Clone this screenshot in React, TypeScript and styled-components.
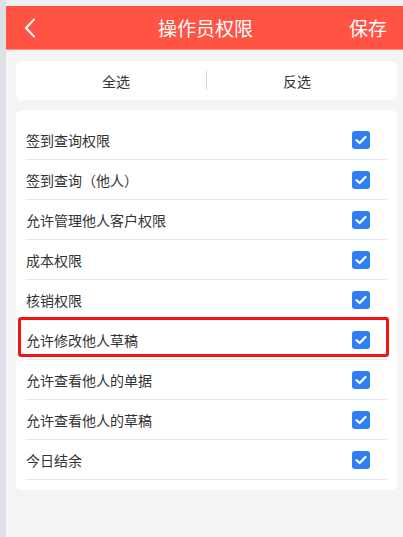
import React from "react";
import styled, { createGlobalStyle } from "styled-components";

const GlobalStyle = createGlobalStyle`
  html, body { margin: 0; padding: 0; }
  body {
    background: #f4f4f4;
    font-family: "Noto Sans CJK SC", "Noto Sans", sans-serif;
  }
  * { box-sizing: border-box; }
`;

const Frame = styled.div`
  display: flex;
  width: 403px;
  height: 537px;
  overflow: hidden;
  background: #efefef;
`;

const LeftStrip = styled.div`
  width: 6px;
  flex: none;
  background: #dde0e5;
`;

const Screen = styled.div`
  flex: 1;
  display: flex;
  flex-direction: column;
  margin-top: 6px;
  background: #f4f4f4;
`;

const Header = styled.header`
  height: 44px;
  flex: none;
  display: grid;
  grid-template-columns: 60px 1fr 60px;
  align-items: center;
  background: #ff5443;
  border-bottom: 1px solid #fb8f84;
  color: #fff;
`;

const BackButton = styled.div`
  display: flex;
  align-items: center;
  padding-left: 18px;
  padding-top: 1px;
`;

const Title = styled.h1`
  margin: 0;
  text-align: center;
  font-size: 19px;
  font-weight: 400;
  line-height: 1;
  padding-left: 2px;
`;

const SaveButton = styled.div`
  text-align: right;
  padding-right: 16px;
  font-size: 19px;
  line-height: 1;
`;

const Body = styled.main`
  display: flex;
  flex-direction: column;
  padding: 11px 6px 0 10px;
  gap: 10px;
`;

const SelectCard = styled.div`
  height: 39px;
  background: #fff;
  border-radius: 6px;
  display: flex;
  align-items: center;
  padding: 0 10px;
`;

const SelectAction = styled.div`
  flex: 1;
  text-align: center;
  font-size: 14px;
  color: #333;
  line-height: 1;
`;

const VDivider = styled.div`
  width: 1px;
  height: 19px;
  background: #d6d6d6;
`;

const ListCard = styled.div`
  background: #fff;
  border-radius: 6px;
  padding: 10px 10px;
`;

const Row = styled.div`
  position: relative;
  height: 40px;
  display: flex;
  align-items: center;
  justify-content: space-between;
  border-bottom: 1px solid #e8e8e8;
  font-size: 14px;
  color: #333;
`;

const Label = styled.span`
  line-height: 1;
`;

const Check = styled.span`
  width: 18px;
  height: 18px;
  margin-right: 17px;
  border-radius: 3px;
  background: #2f7ef6;
  display: flex;
  align-items: center;
  justify-content: center;
`;

const Highlight = styled.div`
  position: absolute;
  left: -8px;
  right: -2px;
  top: -3px;
  height: 40px;
  border: 3px solid #f41414;
  border-radius: 3px;
  pointer-events: none;
`;

const items = [
  "签到查询权限",
  "签到查询（他人）",
  "允许管理他人客户权限",
  "成本权限",
  "核销权限",
  "允许修改他人草稿",
  "允许查看他人的单据",
  "允许查看他人的草稿",
  "今日结余",
];

const CheckIcon = () => (
  <svg width="12" height="10" viewBox="0 0 12 10">
    <path d="M1.5 5.2 L4.6 8 L10.5 2" fill="none" stroke="#fff" strokeWidth="2.2" strokeLinecap="round" strokeLinejoin="round" />
  </svg>
);

export default function App() {
  return (
    <>
      <GlobalStyle />
      <Frame>
        <LeftStrip />
        <Screen>
          <Header>
            <BackButton>
              <svg width="12" height="20" viewBox="0 0 12 20">
                <path d="M10 1.5 L2 10 L10 18.5" fill="none" stroke="#fff" strokeWidth="2" strokeLinecap="round" strokeLinejoin="round" />
              </svg>
            </BackButton>
            <Title>操作员权限</Title>
            <SaveButton>保存</SaveButton>
          </Header>
          <Body>
            <SelectCard>
              <SelectAction>全选</SelectAction>
              <VDivider />
              <SelectAction>反选</SelectAction>
            </SelectCard>
            <ListCard>
              {items.map((t, i) => (
                <Row key={t}>
                  <Label>{t}</Label>
                  <Check>
                    <CheckIcon />
                  </Check>
                  {i === 5 && <Highlight />}
                </Row>
              ))}
            </ListCard>
          </Body>
        </Screen>
      </Frame>
    </>
  );
}
